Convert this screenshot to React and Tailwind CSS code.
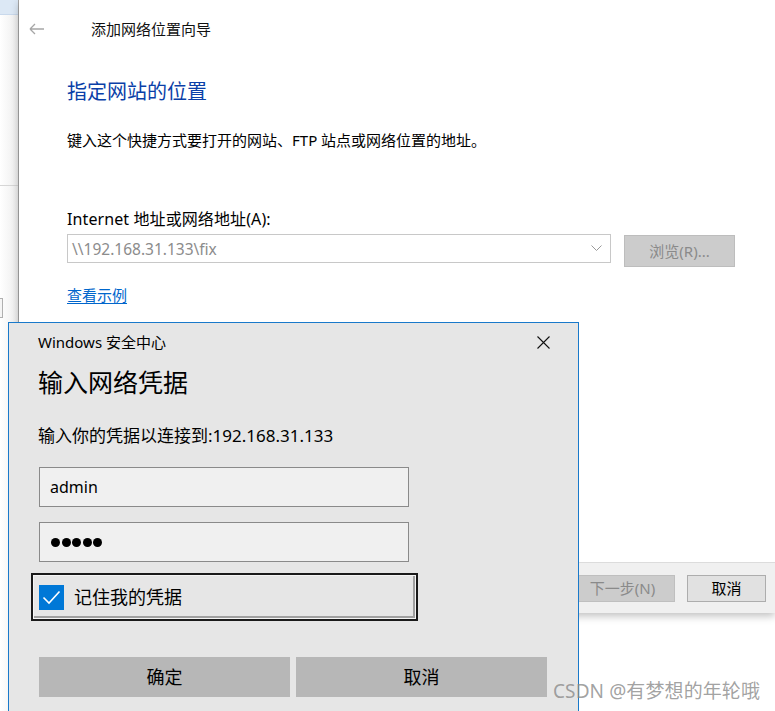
import React from "react";

const F = "font-['Noto_Sans','Noto_Sans_CJK_SC',sans-serif]";

export default function App() {
  return (
    <div className={`relative w-[775px] h-[711px] overflow-hidden bg-white ${F}`}>
      {/* background windows */}
      <div className="flex h-full">
        {/* left explorer strip */}
        <div className="w-[19px] h-full flex flex-col bg-gradient-to-r from-white to-[#ededed] border-r border-[#a8a8a8]">
          <div className="h-[15px] bg-[#dce8f5] border-b border-[#c9d9ec]" />
          <div className="h-[170px]" />
          <div className="h-px bg-[#d6d6d6]" />
          <div className="h-[112px]" />
          <div className="w-[3px] h-[20px] border border-l-0 border-[#b0b0b0] bg-[#f5f5f5]" />
        </div>
        {/* wizard */}
        <div className="flex-1 h-full flex flex-col">
          <div className="h-[613px] flex flex-col bg-white shadow-[0_3px_8px_rgba(0,0,0,0.25)]">
            <div className="h-[58px] flex items-center pl-[10px]">
              <svg width="16" height="12" viewBox="0 0 16 12" className="text-[#a6a6a6]">
                <path d="M1 6 H15 M1 6 L6 1 M1 6 L6 11" stroke="currentColor" strokeWidth="1.3" fill="none" />
              </svg>
              <span className="ml-[46px] text-[15px] leading-[20px] text-[#111]">添加网络位置向导</span>
            </div>
            <div className="pl-[48px] flex flex-col">
              <div className="mt-[21px] text-[20px] leading-[26px] text-[#0a3fa8]">指定网站的位置</div>
              <div className="mt-[25px] text-[15px] leading-[20px] text-[#000]">键入这个快捷方式要打开的网站、FTP 站点或网络位置的地址。</div>
              <div className="mt-[59px] text-[16px] leading-[20px] text-[#000] tracking-[0.1px]">Internet 地址或网络地址(A):</div>
              <div className="mt-[5px] flex items-start gap-[13px]">
                <div className="w-[544px] h-[29px] border border-[#c8c8c8] flex items-center justify-between pl-[4px] pr-[8px]">
                  <span className="text-[15.5px] text-[#8c8c8c] leading-[20px]">\\192.168.31.133\fix</span>
                  <svg width="11" height="7" viewBox="0 0 11 7">
                    <path d="M0.5 0.5 L5.5 5.5 L10.5 0.5" stroke="#999" strokeWidth="1" fill="none" />
                  </svg>
                </div>
                <div className="mt-px w-[111px] h-[32px] bg-[#cccccc] border border-[#bdbdbd] flex items-center justify-center text-[15px] text-[#8a8a8a]">浏览(R)...</div>
              </div>
              <div className="mt-[18px] text-[15px] leading-[20px] text-[#0066cc] underline underline-offset-2">查看示例</div>
            </div>
            <div className="flex-1" />
            <div className="h-[51px] bg-[#f0f0f0] border-t border-[#dcdcdc] flex items-center justify-end gap-[12px] pr-[9px]">
              <div className="w-[105px] h-[27px] bg-[#cccccc] border border-[#bfbfbf] flex items-center justify-center text-[15px] text-[#8a8a8a]">下一步(N)</div>
              <div className="w-[79px] h-[27px] bg-[#e1e1e1] border border-[#adadad] flex items-center justify-center text-[15px] text-[#000]">取消</div>
            </div>
          </div>
        </div>
      </div>

      {/* credentials dialog */}
      <div className="absolute left-[8px] top-[322px] w-[571px] h-[420px] bg-[#e6e6e6] border border-[#1979ca] pl-[30px] pr-[30px] flex flex-col">
        <div className="mt-[9px] h-[20px] flex items-center justify-between">
          <span className="-ml-px text-[15px] leading-[20px] text-[#000]">Windows 安全中心</span>
          <svg width="13" height="13" viewBox="0 0 13 13" className="mr-[-2px]">
            <path d="M0.5 0.5 L12.5 12.5 M12.5 0.5 L0.5 12.5" stroke="#111" strokeWidth="1.1" fill="none" />
          </svg>
        </div>
        <div className="mt-[15px] -ml-px text-[25px] leading-[30px] text-[#000]">输入网络凭据</div>
        <div className="mt-[28px] -ml-px text-[17px] leading-[22px] text-[#000]">输入你的凭据以连接到:192.168.31.133</div>
        <div className="mt-[20px] w-[370px] h-[40px] bg-[#f0f0f0] border border-[#8a8a8a] flex items-center pl-[10px] text-[16px] text-[#000]">admin</div>
        <div className="mt-[15px] w-[370px] h-[40px] bg-[#f0f0f0] border border-[#8a8a8a] flex items-center pl-[11px] gap-[1.5px]">
          <div className="w-[9px] h-[9px] rounded-full bg-black" />
          <div className="w-[9px] h-[9px] rounded-full bg-black" />
          <div className="w-[9px] h-[9px] rounded-full bg-black" />
          <div className="w-[9px] h-[9px] rounded-full bg-black" />
          <div className="w-[9px] h-[9px] rounded-full bg-black" />
        </div>
        <div className="mt-[11px] -ml-[8px] w-[387px] h-[48px] border-2 border-[#1a1a1a] shadow-[inset_0_0_0_1px_#f5f5f5,inset_-2px_-2px_0_1px_#a0a0a0] flex items-center pl-[6px] gap-[10px]">
          <div className="w-[25px] h-[25px] bg-[#0078d7] flex items-center justify-center">
            <svg width="19" height="15" viewBox="0 0 19 15">
              <path d="M1.5 7.5 L7 13 L17.5 1.5" stroke="#fff" strokeWidth="1.6" fill="none" />
            </svg>
          </div>
          <span className="text-[18px] leading-[22px] text-[#000]">记住我的凭据</span>
        </div>
        <div className="mt-[36px] flex gap-[6px]">
          <div className="w-[251px] h-[40px] bg-[#b7b7b7] flex items-center justify-center text-[18px] text-[#000]">确定</div>
          <div className="w-[251px] h-[40px] bg-[#b7b7b7] flex items-center justify-center text-[18px] text-[#000]">取消</div>
        </div>
      </div>

      {/* watermark */}
      <div className="absolute left-[553px] top-[678px] text-[19px] leading-[26px] text-[#8a8a8a]/80 tracking-[0.1px]">CSDN @有梦想的年轮哦</div>
    </div>
  );
}
